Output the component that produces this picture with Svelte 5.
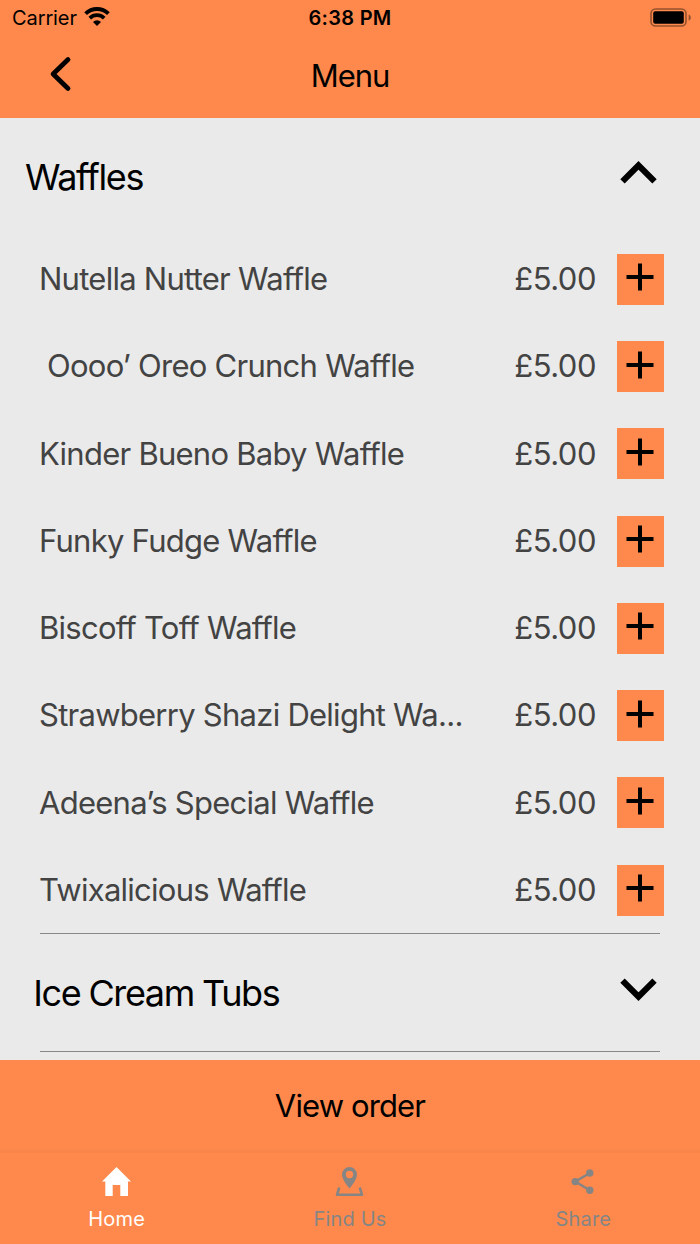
<script>
  let sections = $state([
    {
      title: 'Waffles',
      open: true,
      items: [
        { name: 'Nutella Nutter Waffle', price: 5 },
        { name: ' Oooo’ Oreo Crunch Waffle', price: 5 },
        { name: 'Kinder Bueno Baby Waffle', price: 5 },
        { name: 'Funky Fudge Waffle', price: 5 },
        { name: 'Biscoff Toff Waffle', price: 5 },
        { name: 'Strawberry Shazi Delight Wa...', price: 5 },
        { name: 'Adeena’s Special Waffle', price: 5 },
        { name: 'Twixalicious Waffle', price: 5 },
      ],
    },
    { title: ' Ice Cream Tubs', open: false, items: [] },
  ]);

  const tabs = ['Home', 'Find Us', 'Share'];
  let active = $state('Home');
</script>

<div class="screen">
  <header>
    <div class="status">
      <div class="carrier">
        <span>Carrier</span>
        <svg width="26" height="20" viewBox="0 0 26 20">
          <path d="M1.6 6.6a16.4 16.4 0 0 1 22.8 0" fill="none" stroke="#000" stroke-width="3.9" />
          <path d="M5.8 11.1a10.3 10.3 0 0 1 14.4 0" fill="none" stroke="#000" stroke-width="3.7" />
          <path d="M9 15a5.6 5.6 0 0 1 8 0l-4 4z" />
        </svg>
      </div>
      <div class="time">6:38 PM</div>
      <div class="battery">
        <svg width="42" height="20" viewBox="0 0 42 20">
          <rect x="1" y="1" width="35" height="17" rx="4.6" fill="none" stroke="#96512d" stroke-width="1.6" />
          <rect x="3.2" y="3.2" width="30.6" height="12.6" rx="2" />
          <path d="M38.6 6.4c3 1 3 5.2 0 6.2z" fill="#96512d" />
        </svg>
      </div>
    </div>
    <div class="navbar">
      <button class="back" aria-label="Back">
        <svg width="24" height="38" viewBox="0 0 24 38">
          <path d="M19 4.6 4.1 19 19 33.4" fill="none" stroke="#000" stroke-width="4.8" stroke-linecap="round" stroke-linejoin="round" />
        </svg>
      </button>
      <h1>Menu</h1>
    </div>
  </header>

  <main>
    {#each sections as section}
      <section>
        <button class="section-head" onclick={() => (section.open = !section.open)}>
          <span class="section-title">{section.title}</span>
          <svg class:flip={section.open} width="38" height="24" viewBox="0 0 38 24">
            <path d="M2.5 2.6 18.5 18.6 34.500 2.6" fill="none" stroke="#000" stroke-width="6.2" />
          </svg>
        </button>
        {#if section.open}
          {#each section.items as item}
            <div class="item">
              <span class="name">{item.name}</span>
              <span class="price">£{item.price.toFixed(2)}</span>
              <button class="add" aria-label="Add">
                <svg width="28" height="28" viewBox="0 0 28 28">
                  <path d="M14 0.5v27M0.5 14h27" stroke="#000" stroke-width="4" />
                </svg>
              </button>
            </div>
          {/each}
        {/if}
      </section>
    {/each}
  </main>

  <button class="order">View order</button>

  <nav>
    {#each tabs as tab}
      <button class="tab" class:active={active === tab} onclick={() => (active = tab)}>
        <svg width="30" height="30" viewBox="0 0 30 30" fill="currentColor">
          {#if tab === 'Home'}
            <path d="M14.5 0 29 14.5H26v14.5H18.3V18H10.7V29H3.3V14.5H0z" />
          {:else if tab === 'Find Us'}
            <path fill-rule="evenodd" d="M14.5 0A7.500 7.500 0 0 0 7 7.500C7 12.600 12 18.100 14.500 21.600c2.500-3.500 7.500-9 7.500-14.100A7.500 7.500 0 0 0 14.500 0zm0 3.800a3.700 3.700 0 1 1 0 7.400 3.700 3.700 0 0 1 0-7.400z" />
            <path d="M4.300 20.500 2 27.800H27L24.700 20.500" fill="none" stroke="currentColor" stroke-width="2.600" stroke-linejoin="round" />
          {:else}
            <path d="M21.800 6 7.200 14.600l14.600 8.600" fill="none" stroke="currentColor" stroke-width="2.400" />
            <circle cx="7.200" cy="14.600" r="3.700" />
            <circle cx="21.800" cy="6" r="3.700" />
            <circle cx="21.800" cy="23.200" r="3.700" />
          {/if}
        </svg>
        <span>{tab}</span>
      </button>
    {/each}
  </nav>
</div>

<style>
  :global(body) {
    margin: 0;
  }

  .screen {
    display: flex;
    flex-direction: column;
    width: 700px;
    height: 1244px;
    overflow: hidden;
    background: #eaeaea;
    color: #000;
    font-family: Inter, sans-serif;
  }

  button {
    border: 0;
    padding: 0;
    background: none;
    color: inherit;
    font: inherit;
  }

  svg {
    display: block;
    flex: none;
  }

  header {
    height: 118px;
    flex: none;
    background: #ff894c;
  }

  .status {
    display: grid;
    grid-template-columns: 1fr auto 1fr;
    align-items: center;
    height: 36px;
    font-size: 20px;
  }

  .carrier {
    display: flex;
    align-items: center;
    gap: 8px;
    padding-left: 12px;
    letter-spacing: -0.1px;
  }

  .carrier svg {
    margin: -3px 0 0 -1px;
  }

  .time {
    font-weight: 600;
    letter-spacing: 0.3px;
  }

  .battery {
    display: flex;
    justify-content: flex-end;
    padding: 0 8px 1px 0;
  }

  .navbar {
    display: grid;
    grid-template-columns: 100px 1fr 100px;
    align-items: center;
    height: 80px;
  }

  .back {
    padding: 0 0 5px 49px;
  }

  h1 {
    margin: -2px 0 0;
    font-size: 31px;
    font-weight: 400;
    letter-spacing: -1.1px;
    text-align: center;
  }

  main {
    flex: 1;
    min-height: 0;
  }

  section::after {
    content: '';
    display: block;
    height: 1px;
    margin: 0 40px -1px;
    background: #888;
  }

  .section-head {
    display: flex;
    align-items: center;
    justify-content: space-between;
    width: 100%;
    height: 117.4px;
    padding: 0 42px 0 25px;
  }

  .section-title {
    margin-top: 1px;
    font-size: 36px;
    letter-spacing: -1.4px;
    word-spacing: -0.5px;
    white-space: pre;
  }

  .section-head svg {
    margin-top: -5px;
  }

  .section-head .flip {
    margin-top: -9px;
    transform: scaleY(-1);
  }

  .item {
    display: flex;
    align-items: center;
    height: 87.25px;
    padding: 0 36px 0 39px;
    color: #434343;
    font-size: 31px;
  }

  .name {
    flex: 1;
    margin-top: -1px;
    letter-spacing: -0.74px;
    white-space: pre;
  }

  .price {
    margin: -1px 21px 0 0;
    letter-spacing: -0.5px;
  }

  .add {
    display: flex;
    align-items: center;
    justify-content: center;
    width: 47px;
    height: 51px;
    margin-top: 0.6px;
    padding: 0 1px 4px 0;
    box-sizing: border-box;
    background: #ff894c;
  }

  .order {
    height: 93px;
    flex: none;
    padding-bottom: 2px;
    background: linear-gradient(#ff894c 95%, #f8844a);
    font-size: 31px;
    letter-spacing: -0.87px;
  }

  nav {
    display: grid;
    grid-template-columns: repeat(3, 1fr);
    height: 91px;
    flex: none;
    background: #ff894c;
  }

  .tab {
    display: flex;
    flex-direction: column;
    align-items: center;
    padding-top: 14px;
    color: #858585;
    font-size: 20px;
    letter-spacing: 0.15px;
  }

  .tab span {
    margin-top: 10px;
    line-height: 24px;
  }

  .active {
    color: #fff;
  }
</style>
